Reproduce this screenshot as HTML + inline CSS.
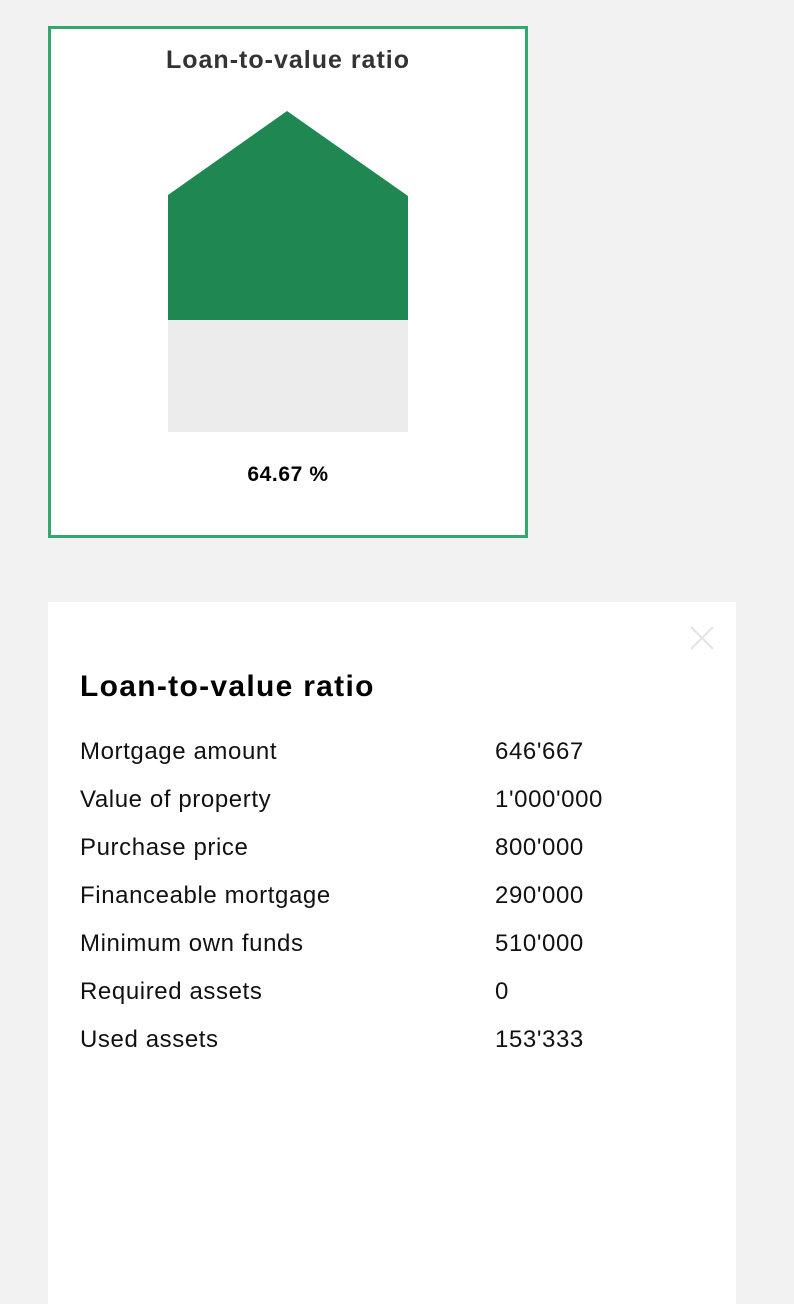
<!DOCTYPE html>
<html><head><style>
body{margin:0;width:794px;height:1304px;background:#f2f2f2;font-family:"Liberation Sans",sans-serif;position:relative;overflow:hidden}
.card{position:absolute;left:48px;top:26px;width:474px;height:506px;border:3px solid #34a86c;background:#fff}
.t{position:absolute;left:0;right:0;top:17px;text-align:center;font-size:25px;font-weight:bold;letter-spacing:1px;color:#333}
.p{position:absolute;left:0;right:0;top:434px;text-align:center;font-size:21px;font-weight:bold;letter-spacing:0.6px;color:#000}
.panel{position:absolute;left:48px;top:602px;width:688px;height:702px;background:#fff}
.h{position:absolute;left:32px;top:68px;font-size:30px;font-weight:bold;letter-spacing:1.3px;color:#000}
.r{position:absolute;left:32px;font-size:24px;letter-spacing:0.6px;color:#111}
.v{position:absolute;left:447px;font-size:24px;letter-spacing:0.6px;color:#111}
</style></head><body>
<div class="card">
<div class="t">Loan-to-value ratio</div>
<svg style="position:absolute;left:0;top:0" width="474" height="506">
<polygon points="117,166 236,82 357,167 357,291 117,291" fill="#1e8752"/>
<rect x="117" y="291" width="240" height="112" fill="#ececec"/>
</svg>
<div class="p">64.67 %</div>
</div>
<div class="panel">
<svg style="position:absolute;left:640px;top:22px" width="30" height="30"><path d="M3 3L25 25M25 3L3 25" stroke="#e4e4e4" stroke-width="2"/></svg>
<div class="h">Loan-to-value ratio</div>
<div class="r" style="top:136px">Mortgage amount</div><div class="v" style="top:136px">646'667</div>
<div class="r" style="top:184px">Value of property</div><div class="v" style="top:184px">1'000'000</div>
<div class="r" style="top:232px">Purchase price</div><div class="v" style="top:232px">800'000</div>
<div class="r" style="top:280px">Financeable mortgage</div><div class="v" style="top:280px">290'000</div>
<div class="r" style="top:328px">Minimum own funds</div><div class="v" style="top:328px">510'000</div>
<div class="r" style="top:376px">Required assets</div><div class="v" style="top:376px">0</div>
<div class="r" style="top:424px">Used assets</div><div class="v" style="top:424px">153'333</div>
</div>
</body></html>
